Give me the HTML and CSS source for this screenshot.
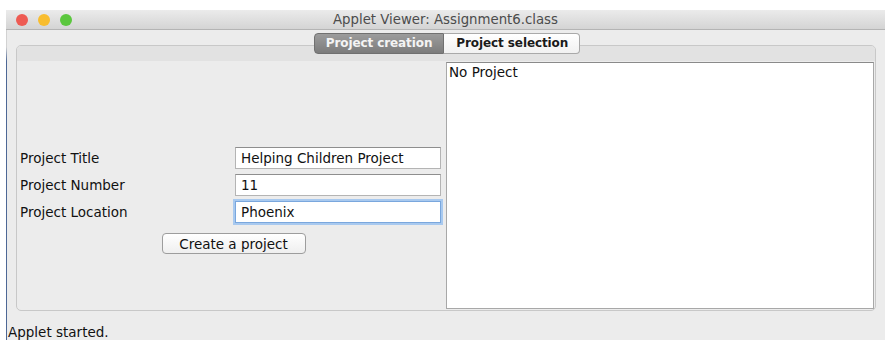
FILE: index.html
```html
<!DOCTYPE html>
<html lang="en">
<head>
  <meta charset="UTF-8">
  <title>Applet Viewer: Assignment6.class</title>
  <link rel="stylesheet" href="styles.css">
</head>
<body>
  <div class="window">
    <div class="titlebar">
      <div class="lights">
        <span class="light red"></span>
        <span class="light yellow"></span>
        <span class="light green"></span>
      </div>
      <span class="title">Applet Viewer: Assignment6.class</span>
      <span></span>
    </div>

    <div class="content">
      <div class="tabs">
        <span class="tab active">Project creation</span>
        <span class="tab">Project selection</span>
      </div>

      <div class="pane">
        <div class="pane-band"></div>
        <div class="pane-body">
          <div class="form-panel">
            <div class="fields">
              <label>Project Title</label>
              <input type="text" value="Helping Children Project">
              <label>Project Number</label>
              <input type="text" value="11">
              <label>Project Location</label>
              <input type="text" class="focused" value="Phoenix">
            </div>
            <button class="create-btn">Create a project</button>
          </div>
          <div class="project-list">No Project</div>
        </div>
      </div>

      <div class="status">Applet started.</div>
    </div>
  </div>
</body>
</html>
```

FILE: styles.css
```css
* {
  margin: 0;
  padding: 0;
  box-sizing: border-box;
}

body {
  background: #ffffff;
  font-family: 'DejaVu Sans', Verdana, sans-serif;
  font-size: 13.5px;
  color: #111111;
}

.window {
  margin: 10px 0 0 6px;
  width: 879px;
  height: 330px;
  background: #ececec;
  display: flex;
  flex-direction: column;
}

.titlebar {
  height: 21px;
  display: grid;
  grid-template-columns: 1fr auto 1fr;
  align-items: center;
  background: linear-gradient(#ebebeb, #d4d4d4);
  border-bottom: 1px solid #b4b4b4;
}

.lights {
  display: flex;
  gap: 10px;
  padding-left: 10px;
}

.light {
  width: 12px;
  height: 12px;
  border-radius: 50%;
}

.red { background: #ee5b53; }
.yellow { background: #f8bd2f; }
.green { background: #5bc73e; }

.title {
  font-size: 13.3px;
  color: #4c4c4c;
}

.content {
  flex: 1;
  padding-top: 3px;
  border-left: 1px solid #4d6795;
  border-image: linear-gradient(#d2d2d2 0, #d2d2d2 18px, #4d6795 32px) 1;
  display: flex;
  flex-direction: column;
}

.tabs {
  display: flex;
  justify-content: center;
  margin-bottom: -9px;
  position: relative;
  z-index: 1;
  padding-left: 2px;
}

.tab {
  height: 21px;
  line-height: 19px;
  padding: 0 11px;
  border: 1px solid #a9a9a9;
  background: linear-gradient(#ffffff, #f1f1f1);
  color: #1a1a1a;
  font-size: 12px;
  font-weight: bold;
  letter-spacing: -0.1px;
}

.tab:last-child {
  border-left: none;
  border-radius: 0 4px 4px 0;
  padding: 0 11px 0 12px;
}

.tab.active {
  background: linear-gradient(#9c9c9c, #7c7c7c);
  border-color: #707070;
  color: #f4f4f4;
  border-radius: 4px 0 0 4px;
}

.pane {
  margin: 0 9px;
  height: 266px;
  border: 1px solid #c8c8c8;
  border-radius: 5px;
  display: flex;
  flex-direction: column;
}

.pane-band {
  height: 15px;
  background: #e2e2e2;
  border-radius: 4px 4px 0 0;
}

.pane-body {
  flex: 1;
  display: grid;
  grid-template-columns: 1fr 428px;
  padding: 1px 1px 1px 0;
}

.form-panel {
  padding: 85px 0 0 3px;
  display: flex;
  flex-direction: column;
}

.fields {
  display: grid;
  grid-template-columns: 215px 206px;
  grid-auto-rows: 22px;
  row-gap: 5px;
  align-items: center;
}

.fields input {
  height: 22px;
  padding: 0 5px;
  border: 1px solid #b4b4b4;
  border-top-color: #8e8e8e;
  background: #ffffff;
  font-family: inherit;
  font-size: 13.5px;
  color: #111111;
  outline: none;
}

.fields input.focused {
  border-color: #7aa7dd;
  box-shadow: 0 0 0 2px #a8c9ef;
}

.create-btn {
  align-self: center;
  margin: 10px 0 0 1px;
  width: 144px;
  height: 21px;
  border: 1px solid #9d9d9d;
  border-radius: 4px;
  background: linear-gradient(#ffffff, #efefef);
  font-family: inherit;
  font-size: 13.5px;
  color: #111111;
}

.project-list {
  background: #ffffff;
  border: 1px solid #a8a8a8;
  border-top-color: #8a8a8a;
  padding: 1px 2px;
  line-height: 16px;
}

.status {
  padding: 13px 0 0 1px;
  line-height: 16px;
}
```
